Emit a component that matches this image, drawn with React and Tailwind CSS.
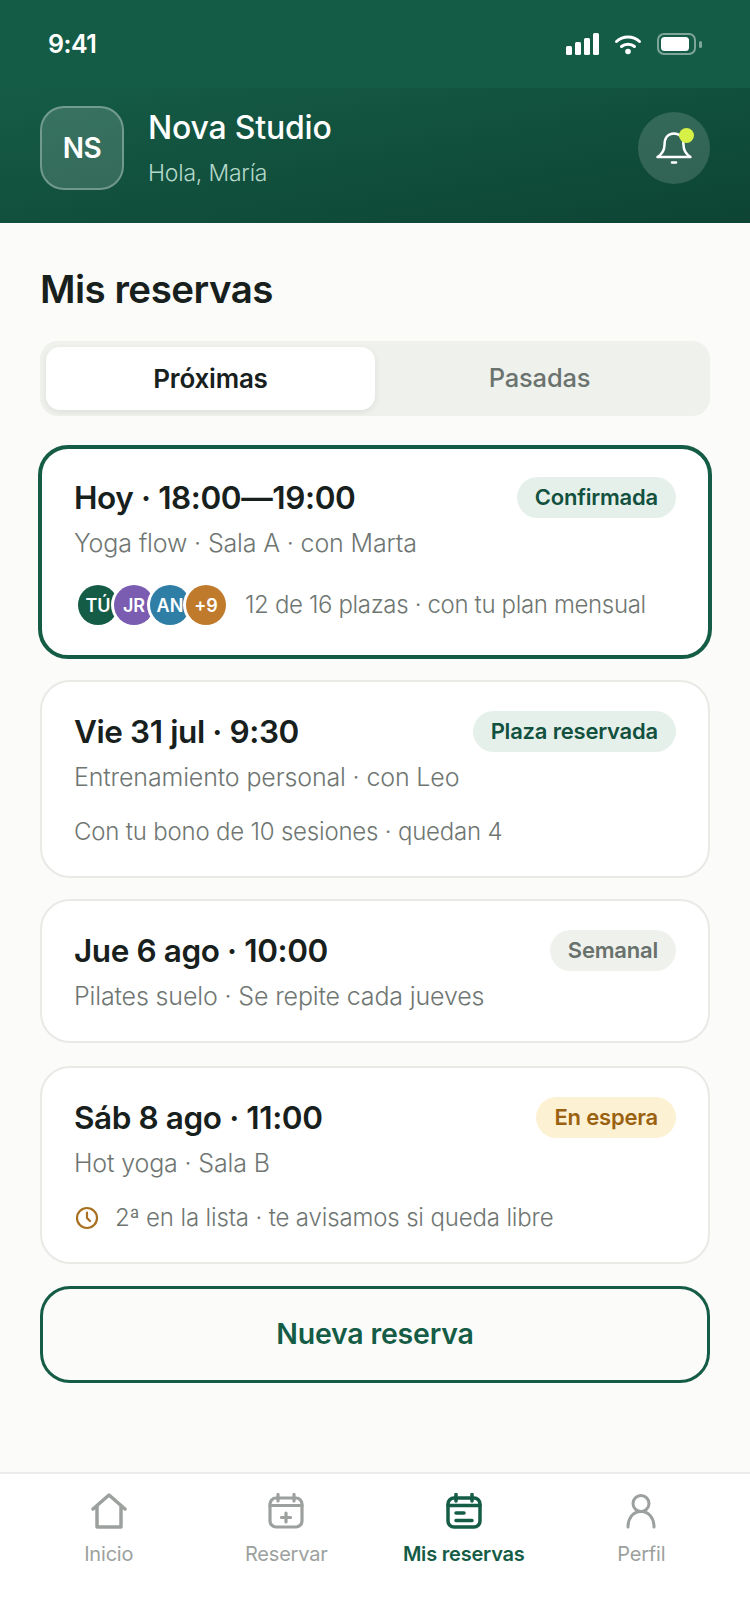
import React from 'react';

const StatusBar = () => (
  <div className="h-[88px] flex items-center justify-between pl-[48px] pr-[48px]">
    <span className="text-[25px] font-semibold text-white tracking-[-0.5px] mt-[1px]">9:41</span>
    <svg width="136" height="22" viewBox="0 0 136 22" fill="none">
      <rect x="0" y="13" width="6" height="9" rx="1.5" fill="#fff" />
      <rect x="9" y="9" width="6" height="13" rx="1.5" fill="#fff" />
      <rect x="18" y="5" width="6" height="17" rx="1.5" fill="#fff" />
      <rect x="27" y="0" width="6" height="22" rx="1.5" fill="#fff" />
      <path d="M50.500 8.500C57 2.500 67 2.500 73.500 8.500" stroke="#fff" strokeWidth="3" strokeLinecap="round" />
      <path d="M55.500 13.500C59 10.500 65 10.500 68.500 13.500" stroke="#fff" strokeWidth="3" strokeLinecap="round" />
      <circle cx="62" cy="18.500" r="2.800" fill="#fff" />
      <rect x="92" y="1" width="37" height="20" rx="6" stroke="#fff" strokeOpacity="0.45" strokeWidth="2" />
      <rect x="95" y="4" width="28" height="14" rx="3.500" fill="#fff" />
      <rect x="133" y="8" width="3" height="7" rx="1.500" fill="#fff" fillOpacity="0.45" />
    </svg>
  </div>
);

const Header = () => (
  <div className="h-[135px] bg-gradient-to-br from-[#155c46] to-[#0d4434] flex items-center justify-between pl-[40px] pr-[40px] pb-[15px]">
    <div className="flex items-center gap-[24px]">
      <div className="w-[84px] h-[84px] rounded-[24px] border-2 border-white/30 bg-white/15 flex items-center justify-center text-white text-[28px] font-semibold tracking-[-0.5px]">
        NS
      </div>
      <div className="flex flex-col">
        <span className="text-white text-[32px] leading-[40px] font-medium tracking-[-0.2px]">Nova Studio</span>
        <span className="text-[#b4d8ca] text-[23px] leading-[32px] mt-[9px] font-light tracking-[-0.2px]">Hola, María</span>
      </div>
    </div>
    <div className="relative w-[72px] h-[72px] rounded-full bg-white/15 flex items-center justify-center">
      <svg width="36" height="36" viewBox="0 0 36 36" fill="none">
        <path d="M1.500 27h33c-4-2.500-7-6-7-12C27.500 8 24 3.500 18 3.500S8.500 8 8.500 15c0 6-3 9.500-7 12Z" stroke="#fff" strokeWidth="2.500" strokeLinejoin="round" />
        <path d="M16 32.500h4" stroke="#fff" strokeWidth="2.500" strokeLinecap="round" />
      </svg>
      <span className="absolute right-[16px] top-[16px] w-[15px] h-[15px] rounded-full bg-[#d6f046]" />
    </div>
  </div>
);

const Tabs = () => (
  <div className="mt-[29px] h-[75px] rounded-[18px] bg-[#eff1ed] p-[6px] flex">
    <div className="flex-1 rounded-[14px] bg-white shadow-[0_2px_6px_rgba(0,0,0,0.08)] flex items-center justify-center text-[26px] font-semibold text-[#17201c] tracking-[-0.2px]">
      Próximas
    </div>
    <div className="flex-1 flex items-center justify-center text-[25.5px] font-medium text-[#6b736f] tracking-[-0.2px]">
      Pasadas
    </div>
  </div>
);

const badgeStyles = {
  green: 'bg-[#e6f0eb] text-[#12513e]',
  gray: 'bg-[#eff1ed] text-[#68716c]',
  amber: 'bg-[#fdf1d3] text-[#9a6210]',
};

const Badge = ({ tone, children }) => (
  <span className={`h-[41px] px-[18px] rounded-full flex items-center text-[22px] font-semibold tracking-[-0.2px] ${badgeStyles[tone]}`}>
    {children}
  </span>
);

const Card = ({ title, badge, tone, sub, children, active = false, className = '' }) => (
  <div className={`bg-white rounded-[30px] ${active ? 'border-[4px] border-[#155c46] -mx-[2px] pt-[28px] pl-[32px] pr-[32px]' : 'border-2 border-[#e8eae6] pt-[29px] pl-[32px] pr-[32px]'} ${className}`}>
    <div className="flex items-center justify-between h-[41px]">
      <span className="text-[31.5px] font-semibold text-[#17201c] tracking-[-0.4px]">{title}</span>
      <Badge tone={tone}>{badge}</Badge>
    </div>
    <div className="mt-[8px] text-[25px] leading-[34px] font-light text-[#6f7672] tracking-[-0.15px]">{sub}</div>
    {children}
  </div>
);

const Avatar = ({ bg, label, first = false }) => (
  <span className={`w-[40px] h-[40px] rounded-full flex items-center justify-center text-white text-[18px] font-semibold ${bg} ${first ? '' : '-ml-[4px] ring-[3px] ring-white'} relative`}>
    {label}
  </span>
);

const NavItem = ({ label, active = false, children }) => (
  <div className="flex-1 flex flex-col items-center">
    <div className="h-[36px] flex items-center justify-center">{children}</div>
    <span className={`mt-[11px] text-[20px] leading-[28px] tracking-[-0.2px] ${active ? 'font-semibold text-[#155c46]' : 'text-[#9ca19e]'}`}>
      {label}
    </span>
  </div>
);

const iconGray = '#9ca19e';
const iconGreen = '#155c46';

const BottomNav = () => (
  <div className="h-[152px] bg-white border-t-2 border-[#ececea] flex pt-[19px] px-[20px]">
    <NavItem label="Inicio">
      <svg width="36" height="36" viewBox="0 0 36 36" fill="none" stroke={iconGray} strokeWidth="3.500" strokeLinejoin="round" strokeLinecap="round">
        <path d="M2 16 18 2l16 14M6 12.500V34h24V12.500" />
      </svg>
    </NavItem>
    <NavItem label="Reservar">
      <svg width="36" height="36" viewBox="0 0 36 36" fill="none" stroke={iconGray} strokeWidth="3.200" strokeLinecap="round">
        <rect x="2" y="5" width="32" height="29" rx="6" />
        <path d="M2 12.500h32M10 1.500V8M26 1.500V8M18 20v9M13.500 24.500h9" />
      </svg>
    </NavItem>
    <NavItem label="Mis reservas" active>
      <svg width="36" height="36" viewBox="0 0 36 36" fill="none" stroke={iconGreen} strokeWidth="3.500" strokeLinecap="round">
        <rect x="2" y="5" width="32" height="29" rx="6" />
        <path d="M2 12.500h32M10 1.500V8M26 1.500V8M10 20h8M10 27.500h16" />
      </svg>
    </NavItem>
    <NavItem label="Perfil">
      <svg width="32" height="36" viewBox="0 0 32 36" fill="none" stroke={iconGray} strokeWidth="3" strokeLinecap="round">
        <circle cx="16" cy="10.500" r="8" />
        <path d="M3 34c0-9 5-15.500 13-15.500S29 25 29 34" />
      </svg>
    </NavItem>
  </div>
);

export default function App() {
  return (
    <div className="w-[750px] h-[1624px] bg-[#fbfbf9] flex flex-col font-['Inter',sans-serif]">
      <div className="bg-[#155c46]">
        <StatusBar />
      </div>
      <Header />

      <div className="flex-1 px-[40px] pt-[43px]">
        <h1 className="text-[38.5px] leading-[46px] font-semibold text-[#17201c] tracking-[-0.5px]">Mis reservas</h1>
        <Tabs />

        <div className="mt-[29px] flex flex-col gap-[21px]">
          <Card active className="pb-[30px]" title="Hoy · 18:00—19:00" badge="Confirmada" tone="green" sub="Yoga flow · Sala A · con Marta">
            <div className="mt-[25px] flex items-center">
              <div className="flex pl-[4px]">
                <Avatar bg="bg-[#155c46]" label="TÚ" first />
                <Avatar bg="bg-[#7a5cb0]" label="JR" />
                <Avatar bg="bg-[#2f7ea6]" label="AN" />
                <Avatar bg="bg-[#c07a2c]" label="+9" />
              </div>
              <span className="ml-[19px] text-[24px] font-light text-[#6f7672] tracking-[-0.35px]">12 de 16 plazas · con tu plan mensual</span>
            </div>
          </Card>

          <Card className="pb-[26px]" title="Vie 31 jul · 9:30" badge="Plaza reservada" tone="green" sub="Entrenamiento personal · con Leo">
            <div className="mt-[20px] text-[24px] font-light text-[#6f7672] tracking-[-0.2px]">Con tu bono de 10 sesiones · quedan 4</div>
          </Card>

          <Card className="pb-[28px]" title="Jue 6 ago · 10:00" badge="Semanal" tone="gray" sub="Pilates suelo · Se repite cada jueves" />

          <Card className="mt-[2px] pb-[26px]" title="Sáb 8 ago · 11:00" badge="En espera" tone="amber" sub="Hot yoga · Sala B">
            <div className="mt-[20px] flex items-center gap-[16px] pl-[1px]">
              <svg width="24" height="24" viewBox="0 0 24 24" fill="none" stroke="#a8701f" strokeWidth="2.200" strokeLinecap="round" strokeLinejoin="round">
                <circle cx="12" cy="12" r="10" />
                <path d="M12 6.500V12l3 3" />
              </svg>
              <span className="text-[24px] font-light text-[#6f7672] tracking-[-0.15px]">2ª en la lista · te avisamos si queda libre</span>
            </div>
          </Card>

          <div className="mt-[1px] h-[97px] rounded-[30px] border-[3px] border-[#155c46] flex items-center justify-center text-[28.5px] font-semibold text-[#155c46] tracking-[-0.2px]">
            Nueva reserva
          </div>
        </div>
      </div>

      <BottomNav />
    </div>
  );
}
